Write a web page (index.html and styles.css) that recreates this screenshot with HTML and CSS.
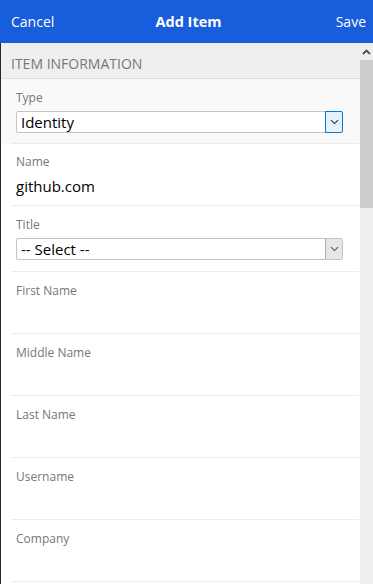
FILE: index.html
```html
<!DOCTYPE html>
<html>
<head>
<meta charset="utf-8">
<link rel="stylesheet" href="styles.css">
</head>
<body>
<div class="app">
  <header class="topbar">
    <span class="btn">Cancel</span>
    <span class="title">Add Item</span>
    <span class="btn btn-right">Save</span>
  </header>
  <div class="main">
    <div class="content">
      <div class="section-head">Item Information</div>
      <div class="row row-active">
        <div class="inner inner-select">
          <div class="label">Type</div>
          <div class="select select-hover">
            <span class="select-text">Identity</span>
            <span class="select-btn"><svg width="9" height="6" viewBox="0 0 9 6"><path d="M1 1.2 L4.5 4.6 L8 1.2" fill="none" stroke="#333" stroke-width="1.1"/></svg></span>
          </div>
        </div>
      </div>
      <div class="row">
        <div class="inner inner-text name-inner">
          <div class="label">Name</div>
          <div class="value">github.com</div>
        </div>
      </div>
      <div class="row">
        <div class="inner inner-select title-inner">
          <div class="label">Title</div>
          <div class="select">
            <span class="select-text">-- Select --</span>
            <span class="select-btn"><svg width="9" height="6" viewBox="0 0 9 6"><path d="M1 1.2 L4.5 4.6 L8 1.2" fill="none" stroke="#555" stroke-width="1.1"/></svg></span>
          </div>
        </div>
      </div>
      <div class="row"><div class="inner inner-text"><div class="label">First Name</div><div class="value"></div></div></div>
      <div class="row"><div class="inner inner-text"><div class="label">Middle Name</div><div class="value"></div></div></div>
      <div class="row"><div class="inner inner-text"><div class="label">Last Name</div><div class="value"></div></div></div>
      <div class="row"><div class="inner inner-text"><div class="label">Username</div><div class="value"></div></div></div>
      <div class="row"><div class="inner inner-text"><div class="label">Company</div><div class="value"></div></div></div>
    </div>
    <div class="scrollbar">
      <div class="sb-up"><svg width="9" height="6" viewBox="0 0 9 6"><path d="M1 5 L4.5 1.5 L8 5" fill="none" stroke="#505050" stroke-width="1.8"/></svg></div>
      <div class="sb-thumb"></div>
    </div>
  </div>
</div>
</body>
</html>
```

FILE: styles.css
```css
html, body {
  margin: 0;
  padding: 0;
}
body {
  width: 373px;
  height: 584px;
  overflow: hidden;
  font-family: "Open Sans", "Noto Sans", sans-serif;
  background: #ffffff;
}
.app {
  display: flex;
  flex-direction: column;
  height: 584px;
}
.topbar {
  height: 43px;
  flex: none;
  background: #175ddc;
  color: #ffffff;
  display: grid;
  grid-template-columns: 1fr auto 1fr;
  align-items: center;
  padding: 0 7px 0 11px;
  font-size: 14px;
  box-sizing: border-box;
}
.topbar .title {
  font-weight: 700;
  font-size: 14.5px;
}
.btn-right {
  justify-self: end;
}
.main {
  flex: 1;
  display: flex;
  min-height: 0;
}
.content {
  flex: 1;
  border-left: 1px solid #2a2a2a;
  overflow: hidden;
}
.section-head {
  background: #efefef;
  border-bottom: 1px solid #dedede;
  color: #777777;
  text-transform: uppercase;
  font-size: 14px;
  padding: 9px 0 2px 10px;
  height: 24px;
  line-height: 24px;
}
.row {
  background: #ffffff;
}
.row-active {
  background: #f9f9f9;
}
.inner {
  margin: 0 1px 0 10px;
  padding: 0 16px 0 5px;
  border-bottom: 1px solid #ececec;
}
.inner-select {
  padding-top: 11px;
  padding-bottom: 10px;
}
.title-inner {
  padding-bottom: 11px;
}
.inner-text {
  padding-top: 11px;
  padding-bottom: 8px;
}
.name-inner {
  padding-top: 10px;
  padding-bottom: 9px;
}
.label {
  font-size: 12px;
  line-height: 16px;
  color: #777777;
}
.inner-select .label {
  margin-bottom: 5px;
}
.inner-text .label {
  margin-bottom: 6px;
}
.value {
  font-size: 15px;
  line-height: 20px;
  height: 20px;
  color: #000000;
}
.select {
  height: 22px;
  box-sizing: border-box;
  border: 1px solid #c4c4c4;
  border-radius: 2px;
  background: #ffffff;
  display: flex;
  align-items: stretch;
}
.select-text {
  flex: 1;
  font-size: 15px;
  line-height: 20px;
  padding-left: 4px;
  color: #000000;
}
.select-btn {
  width: 16px;
  display: flex;
  align-items: center;
  justify-content: center;
  background: #e6e6e6;
  border-left: 1px solid #adadad;
}
.select-hover .select-btn {
  background: #e5f1fb;
  border: 1px solid #0078d7;
  margin: -1px -1px -1px 0;
  border-radius: 0 2px 2px 0;
}
.scrollbar {
  width: 13px;
  flex: none;
  background: #efefef;
  display: flex;
  flex-direction: column;
}
.sb-up {
  height: 17px;
  display: flex;
  align-items: center;
  justify-content: center;
}
.sb-thumb {
  height: 148px;
  background: #cdcdcd;
}
```
